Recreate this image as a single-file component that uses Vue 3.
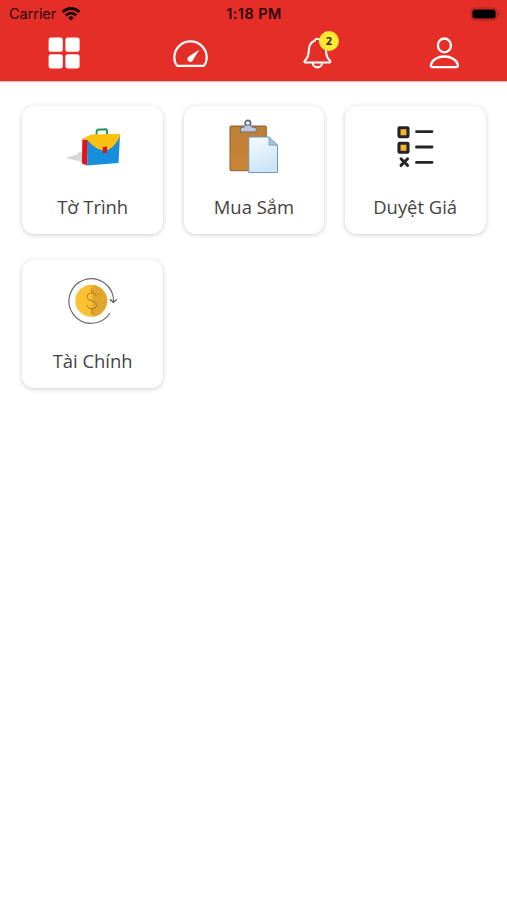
<script setup>
import { ref } from 'vue'

const tabs = ['grid', 'gauge', 'bell', 'person']
const unread = ref(2)

const modules = [
  { id: 'briefcase', label: 'Tờ Trình' },
  { id: 'clipboard', label: 'Mua Sắm' },
  { id: 'checklist', label: 'Duyệt Giá' },
  { id: 'coin', label: 'Tài Chính' },
]
</script>

<template>
  <div class="screen">
    <header class="top">
      <!-- status bar -->
      <div class="status">
        <div class="st-left">
          <span class="st-carrier">Carrier</span>
          <svg class="st-wifi" viewBox="0 0 18 14" fill="none" stroke="#1a0202" stroke-width="2.8">
            <path d="M.7 5a11.6 11.6 0 0 1 16.6 0" />
            <path d="M3.8 8.4a7.3 7.3 0 0 1 10.4 0" />
            <path d="M9 13.6l-2.8-2.9a4 4 0 0 1 5.6 0z" fill="#1a0202" stroke="none" />
          </svg>
        </div>
        <span class="st-time">1:18 PM</span>
        <div class="st-right">
          <svg class="st-battery" viewBox="0 0 30 14">
            <rect x="1" y="1" width="26" height="12" rx="3.6" fill="none" stroke="#a8211e" />
            <rect x="2.4" y="2.4" width="23.2" height="9.2" rx="2.4" fill="#000" />
            <path d="M28.4 5v4q1.4-.6 1.4-2t-1.4-2z" fill="#a8211e" />
          </svg>
        </div>
      </div>

      <!-- tabs -->
      <nav class="tabs">
        <button v-for="t in tabs" :key="t" class="tab" :aria-label="t">
          <svg v-if="t === 'grid'" class="tab-icon" viewBox="0 0 36 36" fill="#fff">
            <rect x="3.6" y="2.6" width="14.2" height="14.2" rx="2.6" />
            <rect x="20.4" y="2.6" width="14.2" height="14.2" rx="2.6" />
            <rect x="3.6" y="19.2" width="14.2" height="14.2" rx="2.6" />
            <rect x="20.4" y="19.2" width="14.2" height="14.2" rx="2.6" />
          </svg>
          <svg v-else-if="t === 'gauge'" class="tab-icon" viewBox="0 0 36 36" fill="none" stroke="#fff" stroke-width="2.2">
            <path d="M5.2 30.9Q2.3 27.5 2.3 22.6a16.2 16.2 0 0 1 32.4 0q0 4.9-2.9 8.3z" stroke-linejoin="round" />
            <path d="M27.4 14.5L20.9 25.3a2.9 2.9 0 1 1-4.7-3.3z" fill="#fff" stroke="none" />
          </svg>
          <svg v-else-if="t === 'bell'" class="tab-icon" viewBox="0 0 36 36" fill="none" stroke="#fff" stroke-width="2.1" stroke-linejoin="round">
            <path d="M18.4 3.7c1.5 0 2.4.8 2.8 2 3.8 1.4 5.6 4.8 5.7 9 .1 6.5 1.4 8.6 4 10.9.9.9.5 1.9-.6 1.9H6.5c-1.1 0-1.5-1-.6-1.9 2.6-2.3 3.9-4.4 4-10.9.1-4.2 1.9-7.6 5.7-9 .4-1.2 1.3-2 2.8-2z" />
            <path d="M13.7 27.5a4.7 4.9 0 0 0 9.4 0" />
          </svg>
          <svg v-else class="tab-icon" viewBox="0 0 36 36" fill="none" stroke="#fff" stroke-width="2.3">
            <ellipse cx="18.4" cy="10.4" rx="6.5" ry="6.9" />
            <path d="M6.6 32.2c-1.3 0-1.9-.8-1.7-2.1 1-5.4 7.1-8.6 13.5-8.6s12.5 3.2 13.5 8.6c.2 1.3-.4 2.1-1.7 2.1z" />
          </svg>
          <span v-if="t === 'bell'" class="badge">{{ unread }}</span>
        </button>
      </nav>
    </header>

    <main class="modules">
      <article v-for="m in modules" :key="m.id" class="card">
        <svg v-if="m.id === 'briefcase'" class="card-icon" viewBox="0 0 56 56">
          <path d="M1 39l11-3.4 1-2 5-.6v10.2z" fill="#d6d6d6" />
          <path d="M31.3 18l.4-6.3 1-1 8.3-.4 1 1V17" fill="none" stroke="#17994a" stroke-width="1.9" />
          <path d="M17.3 20.3l5.7.5-.7 25.7-5.3-2z" fill="#e2131c" />
          <path d="M22.5 20.5l32.5-4-1.5 27.5-31.2 2.5z" fill="#168fdc" />
          <path d="M17.3 20l8.5-4.6L55 14.8l-.2 3C50.5 26 46 31 39.8 31.4 33 31.3 28 27 22.5 21z" fill="#fbc110" />
          <path d="M37.8 28l4.2-.4v6.2l-4.2.5z" fill="#d5161d" />
        </svg>
        <svg v-else-if="m.id === 'clipboard'" class="card-icon" viewBox="0 0 56 56">
          <defs>
            <linearGradient id="board" x1="0" y1="0" x2="0" y2="1">
              <stop offset="0" stop-color="#bd7f37" />
              <stop offset="1" stop-color="#cb8437" />
            </linearGradient>
            <linearGradient id="sheet" x1="0" y1="0" x2=".3" y2="1">
              <stop offset="0" stop-color="#f6fbff" />
              <stop offset="1" stop-color="#cce5f8" />
            </linearGradient>
          </defs>
          <rect x="4" y="7" width="36.3" height="44.7" rx="1" fill="url(#board)" stroke="#925d2d" />
          <circle cx="21.9" cy="4.1" r="2.7" fill="none" stroke="#57627d" stroke-width="1.7" />
          <path d="M14.6 12.9V8.6l3.5-.6 1.5-2h4.6l1.5 2 4.5.6v4.3z" fill="#bec9dd" stroke="#626d89" />
          <path d="M22.8 18H43l8.5 8.2v27.3H22.8z" fill="url(#sheet)" stroke="#7395b5" />
          <path d="M43 18v8.2h8.5z" fill="#a5c3dc" stroke="#7395b5" stroke-width=".7" />
        </svg>
        <svg v-else-if="m.id === 'checklist'" class="card-icon" viewBox="0 0 56 56" fill="none" stroke="#252525" stroke-width="3.1">
          <rect x="12" y="8.7" width="9" height="9" rx=".6" fill="#f9b62b" />
          <rect x="12" y="24.3" width="9" height="9" rx=".6" fill="#f9b62b" />
          <path d="M14 39.8l6.6 6.6M20.6 39.8l-6.6 6.6" stroke-width="2.9" stroke-linecap="round" />
          <path d="M29.5 12.6H45M29.5 28H45M29.5 43.4H45" stroke-width="2.9" stroke-linecap="round" />
        </svg>
        <svg v-else class="card-icon" viewBox="0 0 56 56" fill="none">
          <circle cx="26.3" cy="27.8" r="16" fill="#fcc133" />
          <path d="M27.3 11.9a16 16 0 0 1 0 31.9z" fill="#e0a52f" />
          <path d="M26.8 15.5v4.4M26.8 35.7v5M31.2 23q-.6-3.1-4.4-3.1c-5.6 0-6.1 6.3-.8 7.7 7.6 1.4 6.9 8.1.9 8.1q-4.5-.1-4.9-3.4" stroke="#a67722" stroke-width="1" />
          <path d="M45 40A22.3 22.3 0 1 1 48.5 28.9" stroke="#6a6a6d" stroke-width="1.2" />
          <path d="M44.9 26.4l3.5 3 3.3-3" stroke="#5f5f62" stroke-width="1.4" />
        </svg>
        <p class="card-label">{{ m.label }}</p>
      </article>
    </main>
  </div>
</template>

<style>
body { background: #fff; }
</style>

<style scoped>
.screen {
  min-height: 900px;
  background: #fff;
  font-family: 'Open Sans', 'Noto Sans', sans-serif;
}

/* ═══ header ═══ */
.top {
  height: 81px;
  background: #e62e29;
  box-shadow: 0 1px 1px rgba(160,20,20,0.3);
}
.status {
  display: grid;
  grid-template-columns: 1fr auto 1fr;
  align-items: center;
  height: 25px;
  padding: 2px 7px 0 9px;
  box-sizing: border-box;
  font-family: Inter, 'Liberation Sans', sans-serif;
  font-size: 14.4px;
  color: #2a0504;
}
.st-left {
  display: flex;
  align-items: center;
  gap: 6px;
}
.st-wifi { width: 18px; height: 14px; }
.st-time {
  font-weight: 600;
  letter-spacing: 0.5px;
  margin-right: 1px;
}
.st-right {
  display: flex;
  justify-content: flex-end;
}
.st-battery { width: 30px; height: 14px; }

.tabs {
  display: grid;
  grid-template-columns: repeat(4, 1fr);
  height: 56px;
}
.tab {
  position: relative;
  display: flex;
  align-items: center;
  justify-content: center;
  padding: 0;
  border: none;
  background: none;
}
.tab-icon { width: 36px; height: 36px; }
.badge {
  position: absolute;
  top: 6px;
  left: calc(50% + 2px);
  width: 20px;
  height: 20px;
  border-radius: 50%;
  background: #fde92f;
  color: #2e2a10;
  font-family: 'Open Sans', sans-serif;
  font-size: 11px;
  font-weight: 700;
  line-height: 20px;
  text-align: center;
}

/* ═══ modules ═══ */
.modules {
  display: grid;
  grid-template-columns: repeat(3, 1fr);
  gap: 26.4px 20.5px;
  padding: 24.6px 21.5px 0 22.3px;
}
.card {
  display: flex;
  flex-direction: column;
  align-items: center;
  height: 128px;
  padding-top: 13.4px;
  box-sizing: border-box;
  border-radius: 12px;
  background: #fff;
  box-shadow: 0 1px 5px rgba(0,0,0,0.2);
}
.card-icon { width: 56px; height: 56px; }
.card-label {
  margin: 19px 0 0;
  font-size: 18.4px;
  line-height: 26px;
  color: #424242;
  white-space: nowrap;
}
</style>
